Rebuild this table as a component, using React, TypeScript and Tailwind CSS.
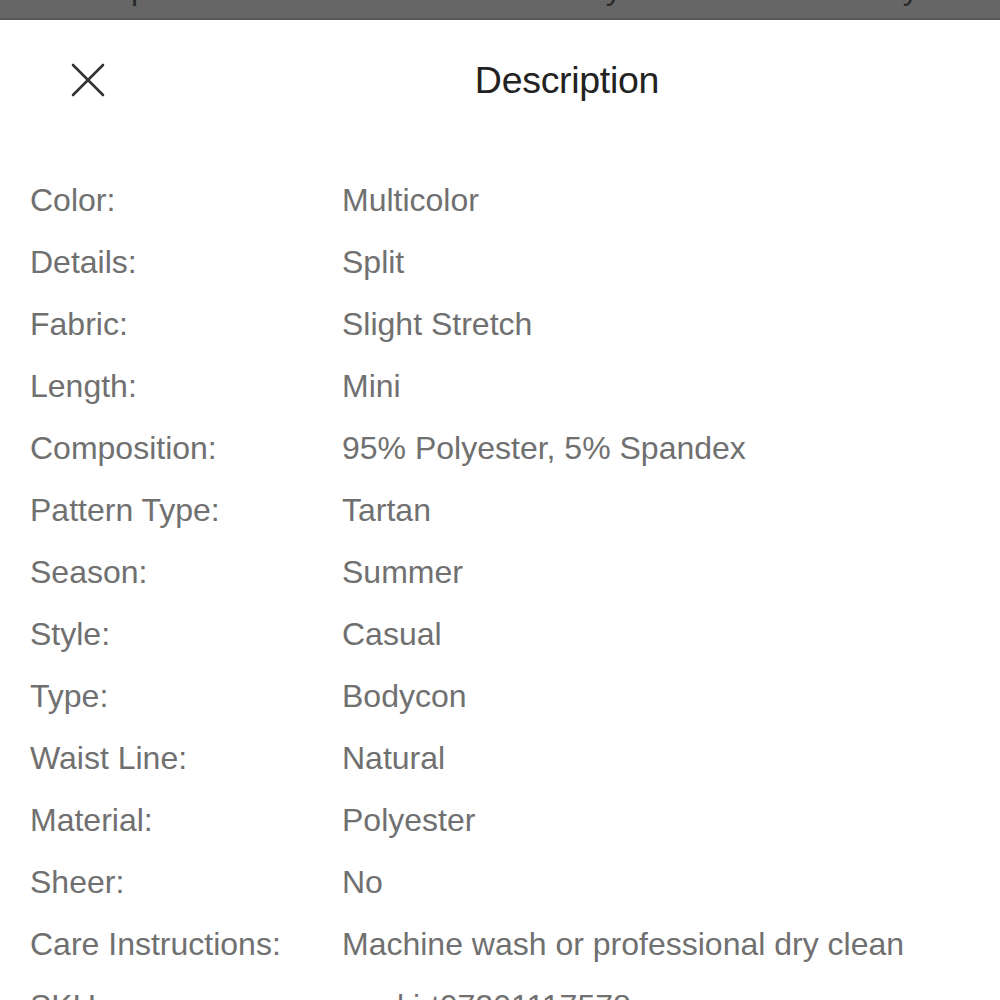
const rows: { label: string; value: string }[] = [
  { label: "Color:", value: "Multicolor" },
  { label: "Details:", value: "Split" },
  { label: "Fabric:", value: "Slight Stretch" },
  { label: "Length:", value: "Mini" },
  { label: "Composition:", value: "95% Polyester, 5% Spandex" },
  { label: "Pattern Type:", value: "Tartan" },
  { label: "Season:", value: "Summer" },
  { label: "Style:", value: "Casual" },
  { label: "Type:", value: "Bodycon" },
  { label: "Waist Line:", value: "Natural" },
  { label: "Material:", value: "Polyester" },
  { label: "Sheer:", value: "No" },
  { label: "Care Instructions:", value: "Machine wash or professional dry clean" },
  { label: "SKU:", value: "swskirt07201117578" },
];

function CloseIcon() {
  return (
    <svg width="34" height="34" viewBox="0 0 34 34" fill="none">
      <path d="M2 2 L32 32 M32 2 L2 32" stroke="#333" strokeWidth="2.6" strokeLinecap="round" />
    </svg>
  );
}

export default function App() {
  return (
    <div className="w-[1000px] h-[1000px] overflow-hidden bg-white font-['Liberation_Sans',Arial,sans-serif]">
      {/* dimmed page behind the sheet */}
      <div className="h-[18px] bg-[#666666] overflow-hidden">
        <div className="flex text-[32px] leading-[32px] text-[#2a2a2a] -mt-[28px]">
          <span className="ml-[131px]">p</span>
          <span className="ml-[457px]">y</span>
          <span className="ml-[281px]">y</span>
        </div>
      </div>
      <div className="h-[2px] bg-[#585858]" />

      <div className="flex items-center h-[120px]">
        <div className="w-[134px] pl-[71px] flex items-center">
          <button className="flex items-center justify-center">
            <CloseIcon />
          </button>
        </div>
        <h1 className="flex-1 text-center text-[37.5px] text-[#222222] tracking-[-0.3px]">Description</h1>
      </div>

      <div className="pt-[29px] pl-[30px]">
        {rows.map((row) => (
          <div key={row.label} className="grid grid-cols-[312px_1fr] h-[62px] items-center text-[32px] leading-none text-[#707070]">
            <span>{row.label}</span>
            <span>{row.value}</span>
          </div>
        ))}
      </div>
    </div>
  );
}
